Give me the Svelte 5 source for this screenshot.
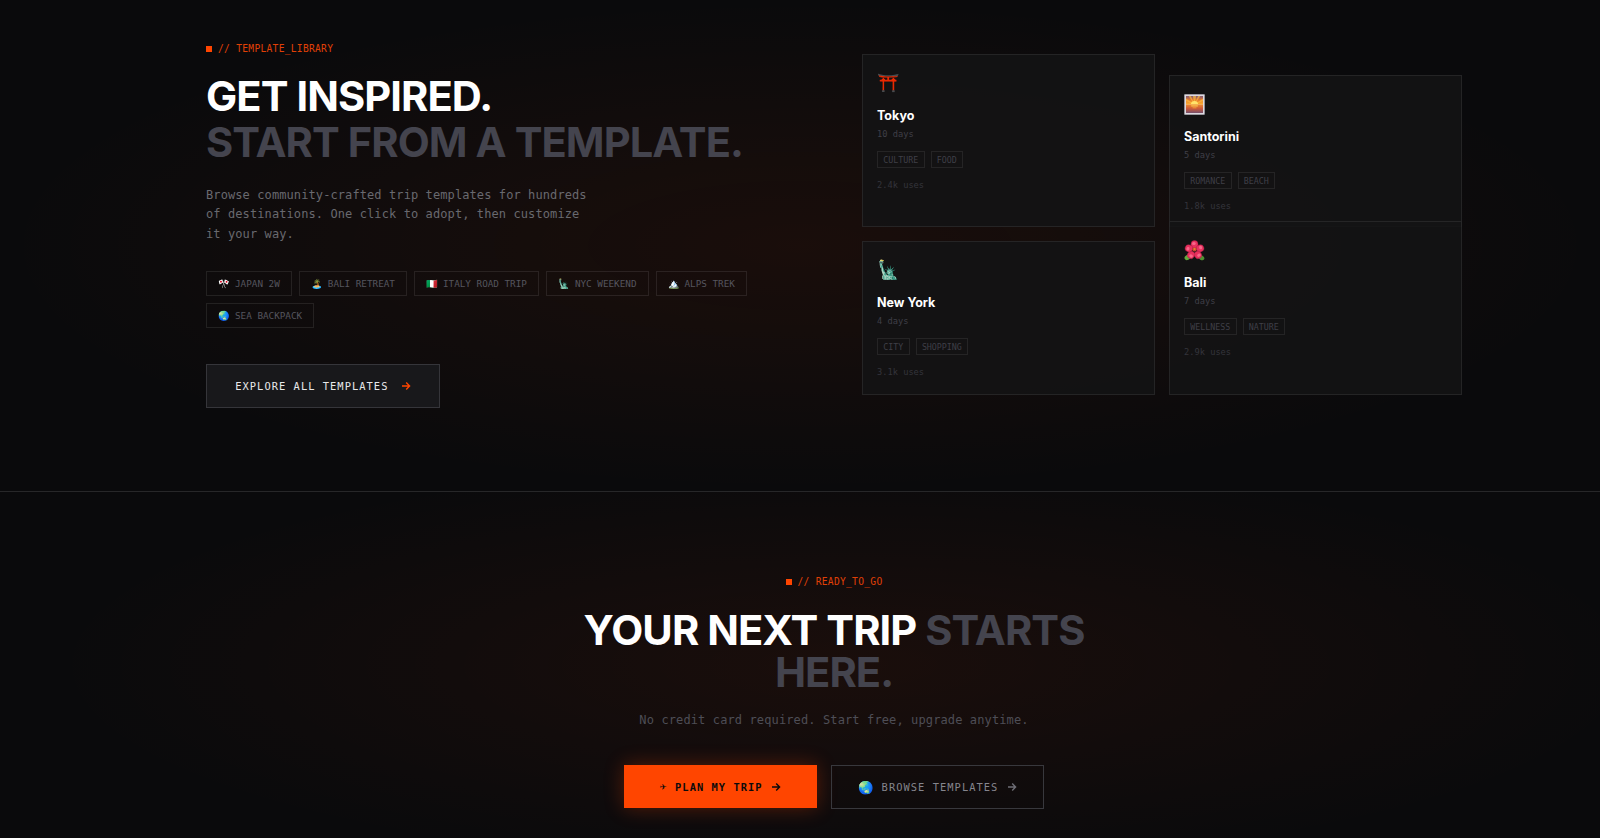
<script>
  const chips = [['🎌', 'JAPAN 2W'], ['🏝️', 'BALI RETREAT'], ['🇮🇹', 'ITALY ROAD TRIP'], ['🗽', 'NYC WEEKEND'], ['🏔️', 'ALPS TREK'], ['🌏', 'SEA BACKPACK']];
  const cards = [
    { icon: '⛩️', name: 'Tokyo', days: '10 days', tags: ['CULTURE', 'FOOD'], uses: '2.4k uses' },
    { art: 'sunset', name: 'Santorini', days: '5 days', tags: ['ROMANCE', 'BEACH'], uses: '1.8k uses' },
    { icon: '🗽', name: 'New York', days: '4 days', tags: ['CITY', 'SHOPPING'], uses: '3.1k uses' },
    { art: 'hibiscus', name: 'Bali', days: '7 days', tags: ['WELLNESS', 'NATURE'], uses: '2.9k uses' }
  ];
  const petals = [0, 72, 144, 216, 288];
</script>

{#snippet arrow()}
  <svg class="arrow" viewBox="0 0 10 10" width="10" height="10" fill="none" stroke="currentColor" stroke-width="1.4" aria-hidden="true"><path d="M1 5h7.4M5.2 1.6 8.6 5 5.2 8.4" /></svg>
{/snippet}

{#snippet sunset()}
  <svg viewBox="0 0 32 32" width="21" height="21" aria-hidden="true">
    <defs>
      <linearGradient id="sky" x1="0" y1="0" x2="0" y2="1">
        <stop offset="0" stop-color="#7b5a78" />
        <stop offset="0.45" stop-color="#e2762f" />
        <stop offset="1" stop-color="#ffb52e" />
      </linearGradient>
      <linearGradient id="sea" x1="0" y1="0" x2="0" y2="1">
        <stop offset="0" stop-color="#f08a2c" />
        <stop offset="0.5" stop-color="#c9573a" />
        <stop offset="1" stop-color="#74506e" />
      </linearGradient>
    </defs>
    <rect x="0.5" y="0.5" width="31" height="31" rx="1.5" fill="#dedce2" stroke="#8f8d96" />
    <rect x="3" y="3" width="26" height="13" fill="url(#sky)" />
    <path d="M16 16 7 3h3.5zM16 16 13.5 3h5zM16 16 21.5 3H25zM16 16 3 7v3.5zM16 16 29 7v3.5z" fill="#ffc23f" opacity="0.65" />
    <path d="M10.5 16a5.5 5.5 0 0 1 11 0z" fill="#ffe36b" />
    <rect x="3" y="16" width="26" height="13" fill="url(#sea)" />
    <rect x="11" y="17.5" width="10" height="1.4" fill="#ffd65a" />
    <rect x="13" y="20.5" width="6" height="1.2" fill="#f7a63a" />
  </svg>
{/snippet}

{#snippet hibiscus()}
  <svg viewBox="0 0 32 32" width="21" height="21" aria-hidden="true">
    <ellipse cx="5.5" cy="26.5" rx="5" ry="3.6" transform="rotate(-30 5.5 26.5)" fill="#63a83c" />
    <ellipse cx="26.5" cy="27" rx="4.8" ry="3.4" transform="rotate(30 26.5 27)" fill="#4f8f33" />
    {#each petals as a}
      <ellipse cx="16" cy="6.6" rx="5.4" ry="5.9" transform="rotate({a} 16 15.5)" fill="#e8305d" stroke="#a81f45" stroke-width="0.6" />
      <ellipse cx="15" cy="5.4" rx="2.8" ry="2.3" transform="rotate({a} 16 15.5)" fill="#f7678a" />
    {/each}
    <circle cx="16" cy="14.5" r="3.2" fill="#c9472f" />
    <circle cx="16" cy="13.6" r="1.6" fill="#e58a2e" />
  </svg>
{/snippet}

<main class="page">
  <section class="library">
    <div class="split">
      <div class="intro">
        <div class="eyebrow"><i></i>// TEMPLATE_LIBRARY</div>
        <h2 class="big">GET INSPIRED.<br /><span>START FROM A TEMPLATE.</span></h2>
        <p class="lead">Browse community-crafted trip templates for hundreds<br />of destinations. One click to adopt, then customize<br />it your way.</p>
        <div class="chips">
          {#each chips as [emoji, label]}<span class="chip"><em>{emoji}</em>{label}</span>{/each}
        </div>
        <button class="explore">EXPLORE ALL TEMPLATES {@render arrow()}</button>
      </div>
      <div class="cards">
        {#each cards as c}
          <article class="card">
            <div class="icon">
              {#if c.art === 'sunset'}{@render sunset()}{:else if c.art === 'hibiscus'}{@render hibiscus()}{:else}{c.icon}{/if}
            </div>
            <h3>{c.name}</h3>
            <div class="days">{c.days}</div>
            <div class="tags">{#each c.tags as t}<span>{t}</span>{/each}</div>
            <div class="uses">{c.uses}</div>
          </article>
        {/each}
      </div>
    </div>
  </section>

  <section class="cta">
    <div class="eyebrow"><i></i>// READY_TO_GO</div>
    <h2 class="mid">YOUR NEXT TRIP <span>STARTS HERE.</span></h2>
    <p class="note">No credit card required. Start free, upgrade anytime.</p>
    <div class="actions">
      <button class="primary"><small>✈</small> PLAN MY TRIP {@render arrow()}</button>
      <button class="secondary"><em>🌏</em> BROWSE TEMPLATES {@render arrow()}</button>
    </div>
  </section>
</main>

<style>
  :global(body) {
    margin: 0;
    background: #0a0a0c;
  }
  .page {
    height: 838px;
    overflow: hidden;
    color: #fff;
    font-family: "DejaVu Sans Mono", "Liberation Mono", monospace;
  }
  .library {
    box-sizing: border-box;
    height: 492px;
    padding: 42px 0 0 68px;
    border-bottom: 1px solid rgba(255, 255, 255, 0.12);
    background: radial-gradient(ellipse 50% 50% at 50% 50%, rgba(255, 69, 0, 0.065), transparent 100%), #0a0a0c;
  }
  .split {
    width: 1256px;
    margin: 0 auto;
    display: grid;
    grid-template-columns: 600px 600px;
    gap: 56px;
    align-items: center;
  }
  .eyebrow {
    display: flex;
    align-items: center;
    font-size: 9.6px;
    line-height: 14px;
    letter-spacing: 0.03em;
    color: #e04006;
  }
  .eyebrow i {
    width: 6px;
    height: 6px;
    margin-right: 6px;
    background: #ff4500;
  }
  h2 {
    margin: 0;
    font-family: Inter, sans-serif;
    font-weight: 700;
    font-size: 41.6px;
    letter-spacing: -0.022em;
    color: #fff;
  }
  h2 span {
    color: #44444e;
  }
  .big {
    margin-top: 18px;
    line-height: 1.1;
  }
  .lead {
    margin: 20px 0 0;
    font-size: 12px;
    line-height: 19.7px;
    letter-spacing: 0.008em;
    color: #69696f;
  }
  .chips {
    display: flex;
    flex-wrap: wrap;
    gap: 7px;
    margin-top: 26px;
  }
  .chip {
    box-sizing: border-box;
    height: 25px;
    padding: 0 11px;
    display: flex;
    align-items: center;
    font-size: 9.3px;
    color: #55555e;
    border: 1px solid rgba(255, 255, 255, 0.09);
  }
  em {
    font-style: normal;
  }
  .chip em {
    margin-right: 5px;
  }
  button {
    display: flex;
    align-items: center;
    justify-content: center;
    font-family: inherit;
    cursor: pointer;
    border-radius: 0;
  }
  .arrow {
    flex: none;
    margin-left: 1px;
  }
  .explore {
    margin-top: 36px;
    width: 234px;
    height: 44px;
    padding: 0;
    font-size: 10.4px;
    letter-spacing: 0.1em;
    white-space: pre;
    color: #e8e8ea;
    background: #18181b;
    border: 1px solid #35353a;
  }
  .explore .arrow {
    margin-left: 5px;
    color: #ff4500;
  }
  .cards {
    display: grid;
    grid-template-columns: 1fr 1fr;
    gap: 14px;
  }
  .card {
    padding: 16px 14px 14px;
    background: rgba(19, 19, 20, 0.88);
    border: 1px solid rgba(255, 255, 255, 0.08);
  }
  .card:nth-child(2) {
    margin-top: 21px;
    padding-bottom: 13px;
  }
  .card:nth-child(n + 3) {
    padding-bottom: 15px;
  }
  .card:nth-child(4) {
    margin-top: -20px;
  }
  .icon {
    display: flex;
    align-items: center;
    height: 24px;
    font-size: 18px;
    line-height: 24px;
    color: #ff4500;
  }
  h3 {
    margin: 11px 0 0;
    font-family: Inter, sans-serif;
    font-size: 12.5px;
    line-height: 20px;
    font-weight: 700;
    color: #fff;
  }
  .days {
    margin-top: 1px;
    font-size: 8.7px;
    line-height: 14px;
    color: #3f3f47;
  }
  .tags {
    display: flex;
    gap: 6px;
    margin-top: 10px;
  }
  .tags span {
    box-sizing: border-box;
    height: 17px;
    padding: 0 5.3px;
    display: flex;
    align-items: center;
    font-size: 8.3px;
    color: #3f3f47;
    border: 1px solid rgba(255, 255, 255, 0.08);
  }
  .uses {
    margin-top: 10px;
    font-size: 8.7px;
    line-height: 14px;
    color: #34343b;
  }
  .cta {
    box-sizing: border-box;
    height: 346px;
    padding: 83px 0 0 68px;
    display: flex;
    flex-direction: column;
    align-items: center;
    text-align: center;
    background: radial-gradient(ellipse 50% 60% at 53% 50%, rgba(255, 69, 0, 0.065), transparent 100%), #0a0a0c;
  }
  .mid {
    margin-top: 21px;
    max-width: 560px;
    line-height: 1;
  }
  .note {
    margin: 17px 0 0;
    font-size: 12px;
    line-height: 20px;
    letter-spacing: 0.01em;
    color: #4e4e56;
  }
  .actions {
    display: flex;
    align-items: flex-start;
    gap: 14px;
    margin-top: 35px;
  }
  .primary {
    width: 193px;
    height: 43px;
    padding: 0;
    font-size: 10.4px;
    font-weight: 700;
    letter-spacing: 0.1em;
    white-space: pre;
    color: #0a0a0c;
    background: #ff4500;
    border: 0;
    box-shadow: 0 0 20px rgba(255, 69, 0, 0.3);
  }
  .primary small {
    font-size: 11px;
  }
  .secondary {
    width: 213px;
    height: 44px;
    padding: 0;
    font-size: 10.4px;
    letter-spacing: 0.1em;
    white-space: pre;
    color: #85858d;
    background: transparent;
    border: 1px solid #38383d;
  }
  .secondary em {
    font-size: 12.5px;
    letter-spacing: 0;
  }
  .secondary .arrow {
    color: #6e6e76;
  }
</style>
